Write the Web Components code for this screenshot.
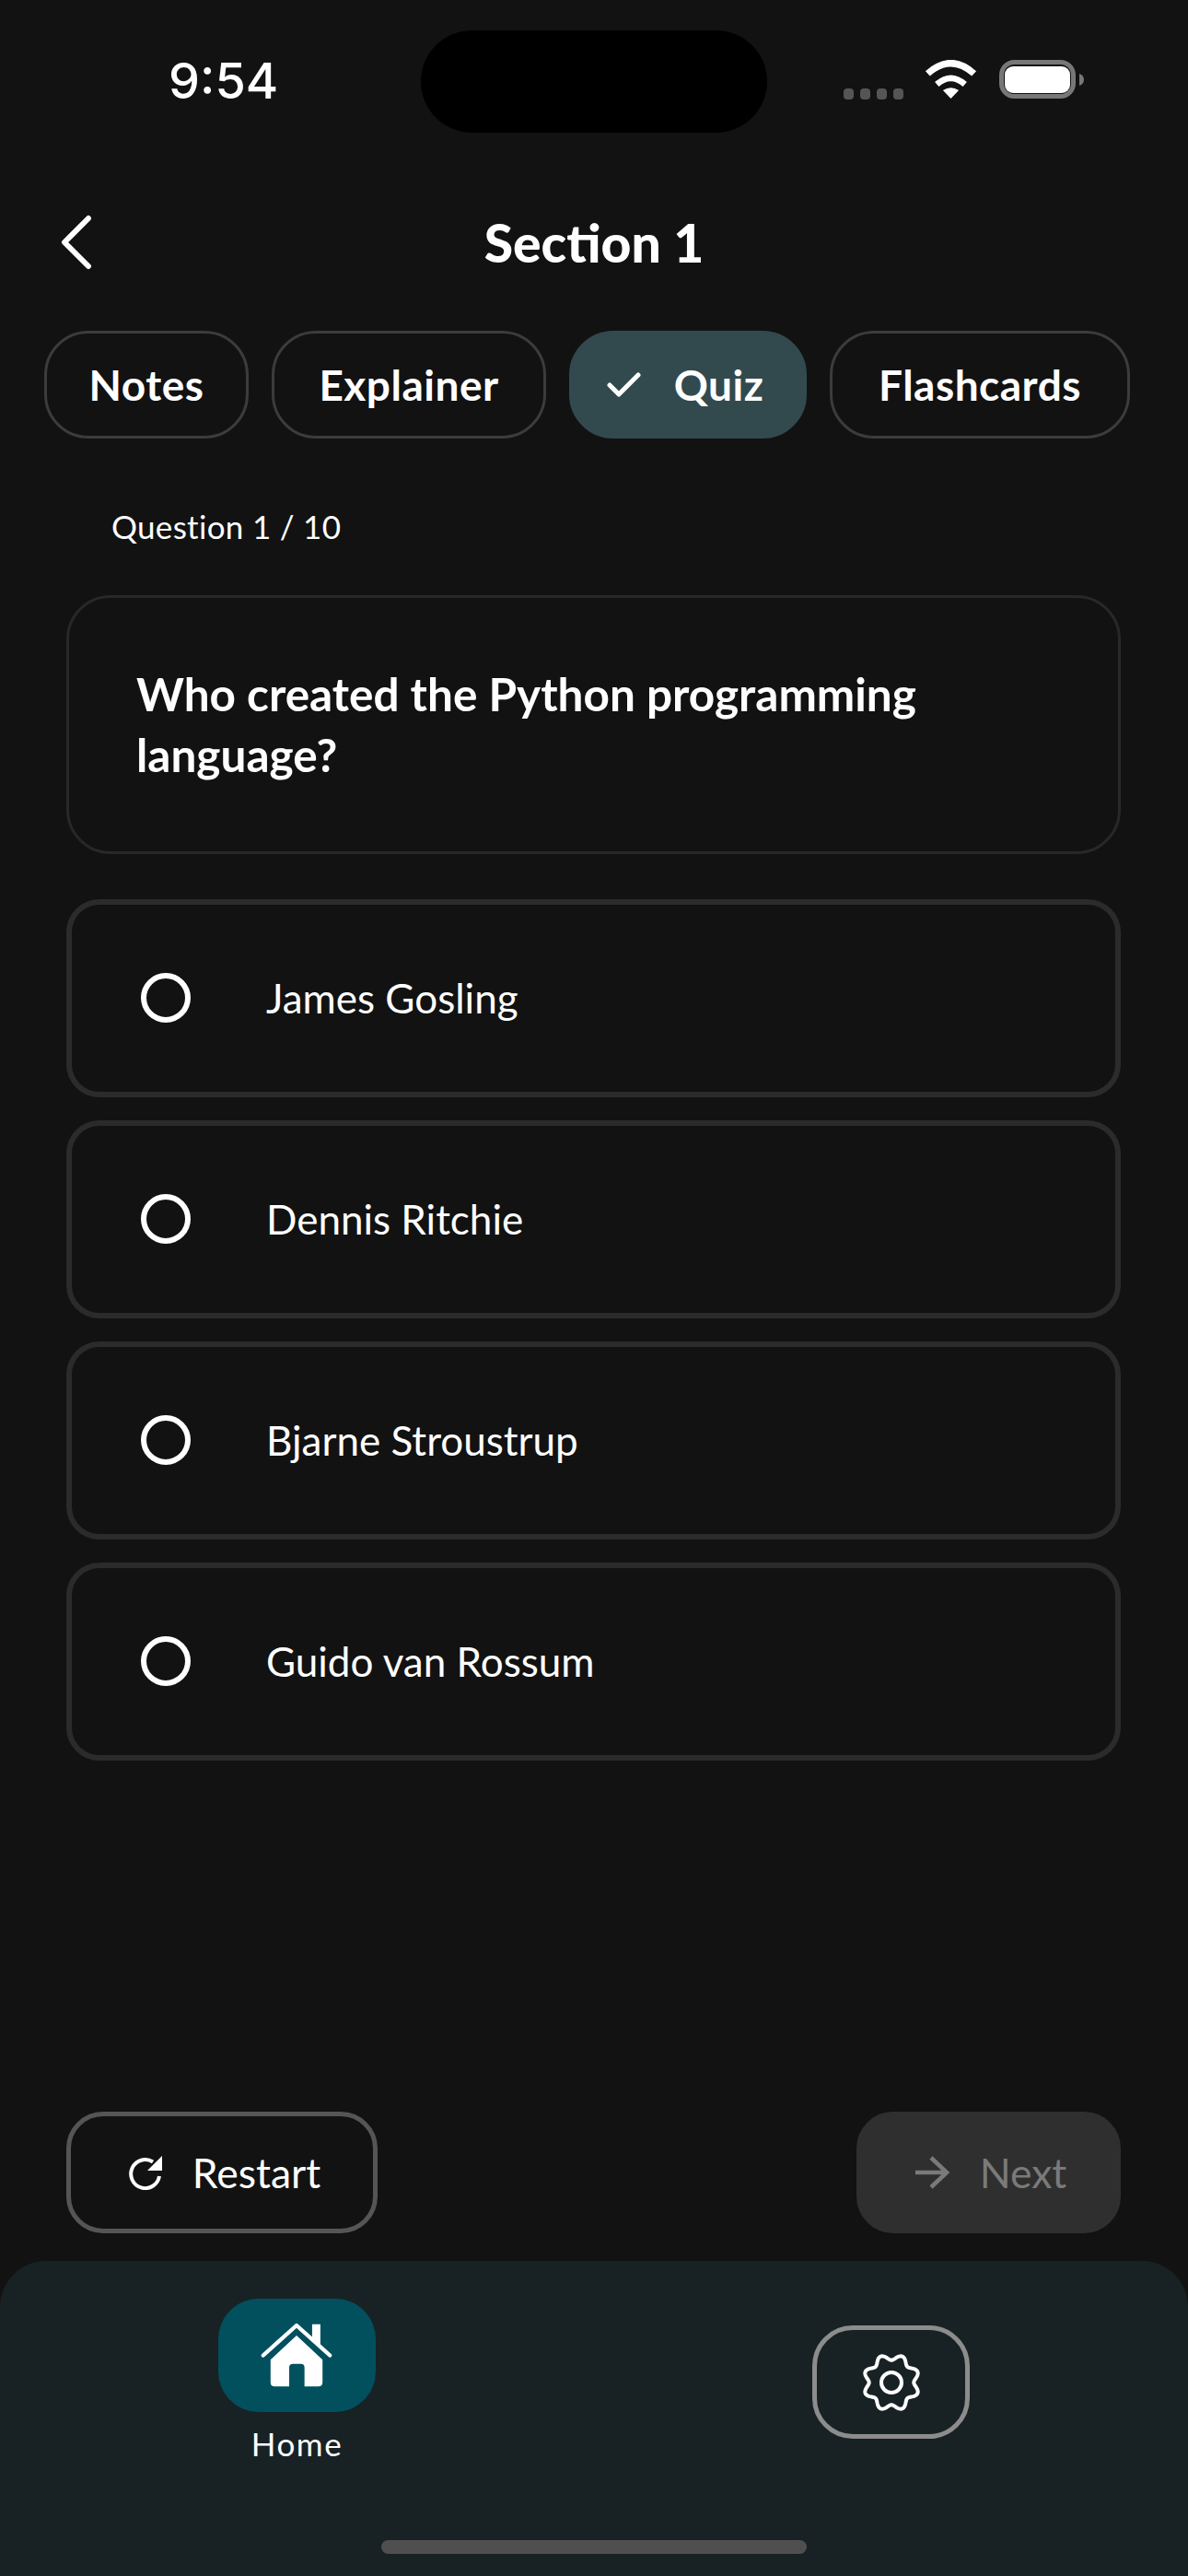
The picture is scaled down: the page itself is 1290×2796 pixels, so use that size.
<!DOCTYPE html>
<html>
<head>
<meta charset="utf-8">
<title>Quiz</title>
<style>
  html, body { margin: 0; padding: 0; background: #121212; }
  body { width: 1290px; height: 2796px; font-family: "Lato", "Noto Sans", sans-serif; color: #fff; display: flex; flex-direction: column; overflow: hidden; }
  main { flex: 1; display: flex; flex-direction: column; padding: 0 73px 0 72px; min-height: 0; }
  .spacer { flex: 1; }
</style>
</head>
<body>
  <status-bar></status-bar>
  <app-header>Section 1</app-header>
  <chip-row>
    <tab-chip style="width:222px">Notes</tab-chip>
    <tab-chip style="width:298px">Explainer</tab-chip>
    <tab-chip style="width:258px" active>Quiz</tab-chip>
    <tab-chip style="width:326px">Flashcards</tab-chip>
  </chip-row>
  <main>
    <question-label>Question 1 / 10</question-label>
    <question-card>Who created the Python programming language?</question-card>
    <quiz-option>James Gosling</quiz-option>
    <quiz-option>Dennis Ritchie</quiz-option>
    <quiz-option>Bjarne Stroustrup</quiz-option>
    <quiz-option>Guido van Rossum</quiz-option>
    <div class="spacer"></div>
    <quiz-actions>
      <action-button icon="restart" style="width:338px">Restart</action-button>
      <action-button icon="next" disabled style="width:287px">Next</action-button>
    </quiz-actions>
  </main>
  <bottom-nav></bottom-nav>

<script>
class StatusBar extends HTMLElement {
  constructor() {
    super();
    this.attachShadow({ mode: 'open' });
    this.shadowRoot.innerHTML = `
      <style>
        :host { display: grid; grid-template-columns: 457px 376px 1fr; height: 144px; flex: none; }
        .time { padding: 59px 0 0 183px; font: 500 54px/58px "Inter", "Liberation Sans", sans-serif; color: #fff; }
        .island { margin-top: 33px; height: 111px; background: #000; border-radius: 56px; }
        .right { display: flex; align-items: flex-start; padding: 65px 0 0 83px; }
        .dots { display: flex; gap: 7px; margin-top: 31px; }
        .dots i { width: 11px; height: 12px; border-radius: 4px; background: #555; }
        svg { display: block; }
        .wifi { margin-left: 23px; }
        .battery { margin-left: 24px; }
      </style>
      <div class="time">9:54</div>
      <div class="island"></div>
      <div class="right">
        <div class="dots"><i></i><i></i><i></i><i></i></div>
        <svg class="wifi" width="57" height="42" viewBox="432 105 172 127" fill="none" stroke="#fff">
          <path d="M442 150Q518 82 594 150" stroke-width="22"/>
          <path d="M472 185Q518 145 564 185" stroke-width="20"/>
          <path d="M492 205Q518 188 544 205L518 232Z" fill="#fff" stroke="none"/>
        </svg>
        <svg class="battery" width="92" height="42" viewBox="0 0 92 42">
          <rect x="2.5" y="2.5" width="78" height="37" rx="14" fill="none" stroke="#777" stroke-width="5"/>
          <rect x="6" y="7" width="71" height="29" rx="9" fill="#fff"/>
          <path d="M87 15c3 1 5 3 5 6.500s-2 5.500-5 6.500z" fill="#777"/>
        </svg>
      </div>`;
  }
}
customElements.define('status-bar', StatusBar);

class AppHeader extends HTMLElement {
  constructor() {
    super();
    this.attachShadow({ mode: 'open' });
    this.shadowRoot.innerHTML = `
      <style>
        :host { display: grid; grid-template-columns: 1fr auto 1fr; align-items: center; height: 118px; margin: 60px 0 37px; flex: none; }
        svg { display: block; margin-left: 64px; }
        h1 { margin: 0; font: 900 57px/118px "Lato", sans-serif; color: #fff; }
      </style>
      <svg width="38" height="60" viewBox="0 0 38 60" fill="none" stroke="#fff" stroke-width="6" stroke-linecap="round" stroke-linejoin="round"><path d="M32 4 6 30l26 26"/></svg>
      <h1><slot></slot></h1>
      <div></div>`;
  }
}
customElements.define('app-header', AppHeader);

class ChipRow extends HTMLElement {
  constructor() {
    super();
    this.attachShadow({ mode: 'open' });
    this.shadowRoot.innerHTML = `
      <style>:host { display: flex; gap: 25px; padding-left: 48px; flex: none; }</style>
      <slot></slot>`;
  }
}
customElements.define('chip-row', ChipRow);

class TabChip extends HTMLElement {
  constructor() {
    super();
    this.attachShadow({ mode: 'open' });
    const check = this.hasAttribute('active')
      ? '<svg width="37" height="27" viewBox="0 0 37 27" fill="none" stroke="#fff" stroke-width="5" stroke-linecap="round" stroke-linejoin="round"><path d="M3 14l10 10L34 3"/></svg>'
      : '';
    this.shadowRoot.innerHTML = `
      <style>
        :host { display: flex; align-items: center; justify-content: center; gap: 36px; height: 117px; box-sizing: border-box; border: 3px solid #3c3c3c; border-radius: 48px; font: 700 46px/1 "Lato", sans-serif; letter-spacing: 0.5px; color: #fff; flex: none; }
        :host([active]) { background: #324a4e; border-color: #324a4e; padding-right: 6px; }
      </style>
      ${check}<span><slot></slot></span>`;
  }
}
customElements.define('tab-chip', TabChip);

class QuestionLabel extends HTMLElement {
  constructor() {
    super();
    this.attachShadow({ mode: 'open' });
    this.shadowRoot.innerHTML = `
      <style>:host { display: block; margin: 73px 0 53px 49px; font: 400 35px/44px "Lato", sans-serif; letter-spacing: 0.3px; color: #fff; }</style>
      <slot></slot>`;
  }
}
customElements.define('question-label', QuestionLabel);

class QuestionCard extends HTMLElement {
  constructor() {
    super();
    this.attachShadow({ mode: 'open' });
    this.shadowRoot.innerHTML = `
      <style>
        :host { display: block; box-sizing: border-box; height: 281px; padding: 71px 73px 0; border: 3px solid #282828; border-radius: 48px; margin-bottom: 49px; font: 700 49.5px/66px "Lato", sans-serif; color: #fff; }
      </style>
      <slot></slot>`;
  }
}
customElements.define('question-card', QuestionCard);

class QuizOption extends HTMLElement {
  constructor() {
    super();
    this.attachShadow({ mode: 'open' });
    this.shadowRoot.innerHTML = `
      <style>
        :host { display: flex; align-items: center; box-sizing: border-box; height: 215px; padding: 0 0 2px 75px; border: 6px solid #2b2b2b; border-radius: 36px; margin-bottom: 25px; font: 400 44px/1 "Lato", sans-serif; color: #fff; }
        i { width: 54px; height: 54px; box-sizing: border-box; border: 6px solid #fff; border-radius: 50%; margin-right: 82px; flex: none; }
      </style>
      <i></i><slot></slot>`;
  }
}
customElements.define('quiz-option', QuizOption);

class QuizActions extends HTMLElement {
  constructor() {
    super();
    this.attachShadow({ mode: 'open' });
    this.shadowRoot.innerHTML = `
      <style>:host { display: flex; justify-content: space-between; margin-bottom: 30px; flex: none; }</style>
      <slot></slot>`;
  }
}
customElements.define('quiz-actions', QuizActions);

const ACTION_ICONS = {
  restart: `<svg width="38" height="38" viewBox="0 0 38 38" fill="none" stroke="currentColor" stroke-width="4"><path d="M27 7.500A15.500 15.500 0 1 0 34 23"/><path d="M37 1v16H21z" fill="currentColor" stroke="none"/></svg>`,
  next: `<svg width="38" height="36" viewBox="0 0 38 36" fill="none" stroke="currentColor" stroke-width="4.500"><path d="M0 18h35M17 2l17 16-17 16"/></svg>`
};

class ActionButton extends HTMLElement {
  constructor() {
    super();
    this.attachShadow({ mode: 'open' });
    this.shadowRoot.innerHTML = `
      <style>
        :host { display: flex; align-items: center; justify-content: center; gap: 32px; height: 132px; box-sizing: border-box; padding-left: 5px; border: 5px solid #555; border-radius: 40px; font: 400 44.5px/1 "Lato", sans-serif; color: #fff; }
        :host([disabled]) { background: #2f2f2f; border-color: #2f2f2f; color: #7a7a7a; }
        svg { display: block; flex: none; }
      </style>
      ${ACTION_ICONS[this.getAttribute('icon')]}<span><slot></slot></span>`;
  }
}
customElements.define('action-button', ActionButton);

function gearPath() {
  // wavy ring with 8 bumps, dips sit on the axes
  const pts = [];
  for (let i = 0; i < 240; i++) {
    const t = i / 240 * Math.PI * 2;
    const r = 27.5 - 3.2 * Math.cos(8 * t);
    pts.push((36 + r * Math.sin(t)).toFixed(2) + ' ' + (36 - r * Math.cos(t)).toFixed(2));
  }
  return 'M' + pts.join('L') + 'Z';
}

class BottomNav extends HTMLElement {
  constructor() {
    super();
    this.attachShadow({ mode: 'open' });
    this.shadowRoot.innerHTML = `
      <style>
        :host { display: flex; flex-direction: column; height: 342px; background: #182224; border-radius: 50px 50px 0 0; flex: none; }
        .items { display: flex; height: 303px; padding-left: 237px; gap: 474px; }
        .home { width: 171px; display: flex; flex-direction: column; align-items: center; padding-top: 41px; }
        .pill { width: 171px; height: 123px; border-radius: 44px; background: #02505e; display: flex; align-items: center; justify-content: center; }
        .label { margin-top: 13px; font: 400 35px/42px "Lato", sans-serif; letter-spacing: 1.500px; color: #fff; }
        .settings { width: 171px; height: 123px; margin-top: 70px; box-sizing: border-box; border: 5px solid #8c8c8c; border-radius: 44px; display: flex; align-items: center; justify-content: center; }
        .bar { width: 462px; height: 15px; border-radius: 8px; background: #4f4f4f; align-self: center; }
        svg { display: block; }
      </style>
      <div class="items">
        <div class="home">
          <div class="pill">
            <svg width="80" height="73" viewBox="190 120 240 220">
              <path d="M222 244 307 165 392 244V318Q392 332 378 332H333V270Q333 258 321 258H295Q283 258 283 270V332H236Q222 332 222 318Z" fill="#fff"/>
              <path d="M358 128H385V202L358 178Z" fill="#fff"/>
              <path d="M198 230 307 132 416 230" fill="none" stroke="#fff" stroke-width="13" stroke-linecap="round" stroke-linejoin="round"/>
            </svg>
          </div>
          <div class="label">Home</div>
        </div>
        <div class="settings">
          <svg width="72" height="72" viewBox="0 0 72 72" fill="none" stroke="#fff" stroke-width="4">
            <path d="${gearPath()}" stroke-linejoin="round"/>
            <circle cx="36" cy="36" r="11"/>
          </svg>
        </div>
      </div>
      <div class="bar"></div>`;
  }
}
customElements.define('bottom-nav', BottomNav);
</script>
</body>
</html>
